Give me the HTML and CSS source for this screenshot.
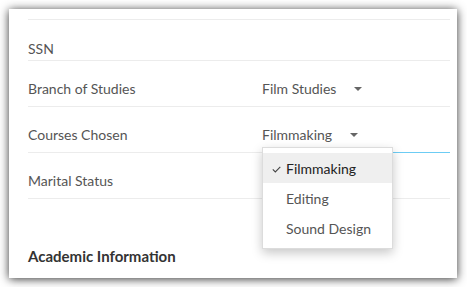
FILE: index.html
```html
<!DOCTYPE html>
<html>
<head>
<meta charset="utf-8">
<link rel="stylesheet" href="styles.css">
</head>
<body>
<div class="card">
  <div class="top-rule"></div>
  <div class="row row-ssn"><span class="label">SSN</span></div>
  <div class="row">
    <span class="label">Branch of Studies</span>
    <span class="value">Film Studies<span class="caret"></span></span>
  </div>
  <div class="row active">
    <span class="label">Courses Chosen</span>
    <span class="value">Filmmaking<span class="caret"></span></span>
    <span class="focus-line"></span>
    <ul class="menu">
      <li class="item selected"><svg class="check" width="9" height="7" viewBox="0 0 9 7"><path d="M0.8 3.4 L3.3 5.9 L8.3 0.8" fill="none" stroke="#444" stroke-width="1.1"/></svg>Filmmaking</li>
      <li class="item">Editing</li>
      <li class="item">Sound Design</li>
    </ul>
  </div>
  <div class="row">
    <span class="label">Marital Status</span>
  </div>
  <h3 class="section">Academic Information</h3>
</div>
</body>
</html>
```
FILE: styles.css
```css
* { box-sizing: border-box; }
html, body { margin: 0; background: #fff; }
body {
  padding: 9px 10px 9px 9px;
  font-family: Lato, "Open Sans", sans-serif;
  font-size: 14px;
  color: #555;
}
.card {
  width: 448px;
  height: 269px;
  background: #fff;
  box-shadow: 0 1px 9px rgba(0,0,0,0.8);
  padding: 0 7px 0 19px;
  position: relative;
}
.top-rule {
  height: 11px;
  border-bottom: 1px solid #ececec;
}
.row {
  display: flex;
  align-items: center;
  line-height: 20px;
  padding: 18px 0 7px;
  border-bottom: 1px solid #ececec;
  position: relative;
}
.row-ssn { padding: 19px 0 1px; }
.label { width: 234px; flex: none; }
.value { display: flex; align-items: center; color: #555; }
.caret {
  width: 0; height: 0;
  margin-left: 18px;
  border-left: 4px solid transparent;
  border-right: 4px solid transparent;
  border-top: 4px solid #666;
}
.focus-line {
  position: absolute;
  left: 234px;
  right: 0;
  bottom: -1px;
  height: 1px;
  background: #6cccf4;
}
.menu {
  position: absolute;
  left: 234px;
  top: 40px;
  width: 131px;
  margin: 0;
  padding: 5px 0 5px;
  list-style: none;
  background: #fff;
  border: 1px solid #dcdcdc;
  box-shadow: 0 4px 10px rgba(0,0,0,0.22);
  z-index: 2;
}
.item {
  height: 30px;
  line-height: 32px;
  padding-left: 23px;
  color: #555;
  position: relative;
}
.item.selected { background: #efefef; color: #222; }
.check { position: absolute; left: 9px; top: 13px; }
.section {
  margin: 0;
  padding-top: 47px;
  font-size: 15px;
  line-height: 20px;
  font-weight: 700;
  color: #333;
}
```
